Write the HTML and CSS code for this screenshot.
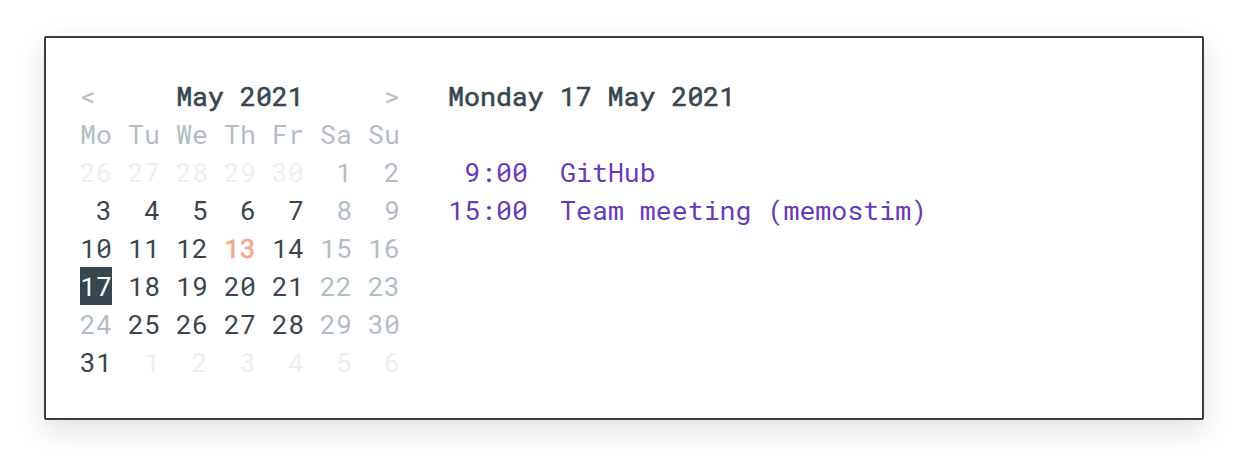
FILE: index.html
```html
<!DOCTYPE html>
<html lang="en">
<head>
<meta charset="utf-8">
<title>Calendar</title>
<link rel="stylesheet" href="styles.css">
</head>
<body>
<div class="card">
  <div class="calendar">
    <div class="cal-head">
      <span class="nav">&lt;</span>
      <span class="month">May 2021</span>
      <span class="nav">&gt;</span>
    </div>
    <div class="grid">
      <span class="wd">Mo</span><span class="wd">Tu</span><span class="wd">We</span><span class="wd">Th</span><span class="wd">Fr</span><span class="wd">Sa</span><span class="wd">Su</span>
      <span class="out">26</span><span class="out">27</span><span class="out">28</span><span class="out">29</span><span class="out">30</span><span class="we">1</span><span class="we">2</span>
      <span>3</span><span>4</span><span>5</span><span>6</span><span>7</span><span class="we">8</span><span class="we">9</span>
      <span>10</span><span>11</span><span>12</span><span class="today">13</span><span>14</span><span class="we">15</span><span class="we">16</span>
      <span class="sel">17</span><span>18</span><span>19</span><span>20</span><span>21</span><span class="we">22</span><span class="we">23</span>
      <span class="we">24</span><span>25</span><span>26</span><span>27</span><span>28</span><span class="we">29</span><span class="we">30</span>
      <span>31</span><span class="out">1</span><span class="out">2</span><span class="out">3</span><span class="out">4</span><span class="out">5</span><span class="out">6</span>
    </div>
  </div>
  <div class="agenda">
    <div class="day-title">Monday 17 May 2021</div>
    <div class="events">
      <span class="time">9:00</span><span class="title">GitHub</span>
      <span class="time">15:00</span><span class="title">Team meeting (memostim)</span>
    </div>
  </div>
</div>
</body>
</html>
```
FILE: styles.css
```css
html, body {
  margin: 0;
  padding: 0;
  background: #ffffff;
}
body {
  padding: 36px 44px;
}
.card {
  display: flex;
  border: 2px solid #3e3e3e;
  border-radius: 2px;
  background: #ffffff;
  box-shadow: 0 10px 28px rgba(0, 0, 0, 0.13);
  padding: 39px 34px 37px 34px;
  font-family: "Roboto Mono", "DejaVu Sans Mono", "Liberation Mono", monospace;
  font-size: 26.6px;
  line-height: 38px;
  color: #37474f;
}
.calendar {
  width: 320px;
}
.cal-head {
  display: flex;
  justify-content: space-between;
}
.nav {
  color: #b0bec5;
}
.month {
  font-weight: 400;
  -webkit-text-stroke: 0.6px currentColor;
}
.grid {
  display: grid;
  grid-template-columns: repeat(7, 32px);
  column-gap: 16px;
}
.grid span {
  text-align: right;
  white-space: pre;
}
.grid .wd {
  color: #b0bec5;
  text-align: left;
}
.grid .out {
  color: #eceff1;
}
.grid .we {
  color: #b0bec5;
}
.grid .today {
  color: #f4a58a;
  -webkit-text-stroke: 0.6px currentColor;
}
.grid .sel {
  background: #37474f;
  color: #ffffff;
}
.agenda {
  margin-left: 48px;
}
.day-title {
  font-weight: 400;
  -webkit-text-stroke: 0.6px currentColor;
  margin-bottom: 38px;
}
.events {
  display: grid;
  grid-template-columns: 80px auto;
  column-gap: 32px;
  color: #673ab7;
}
.time {
  text-align: right;
}
```
